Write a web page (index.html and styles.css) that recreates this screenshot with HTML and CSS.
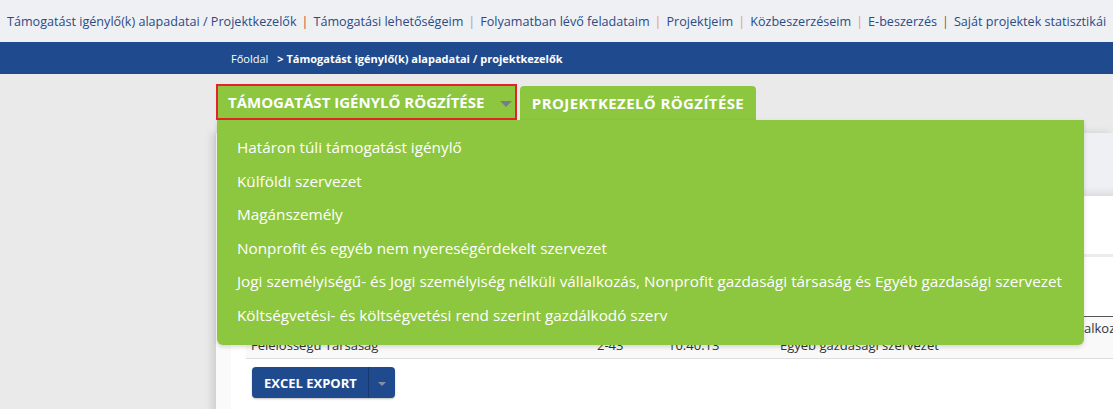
FILE: index.html
```html
<!DOCTYPE html>
<html lang="hu">
<head>
    <meta charset="UTF-8">
    <meta name="viewport" content="width=device-width, initial-scale=1.0">
    <title>Támogatást igénylő(k) alapadatai / Projektkezelők</title>
    <link rel="stylesheet" href="styles.css">
</head>
<body>
    <nav class="top-nav">
        <a href="#">Támogatást igénylő(k) alapadatai / Projektkezelők</a><span class="sep sep-red">|</span>
        <a href="#">Támogatási lehetőségeim</a><span class="sep sep-grey">|</span>
        <a href="#">Folyamatban lévő feladataim</a><span class="sep sep-orange">|</span>
        <a href="#">Projektjeim</a><span class="sep sep-orange">|</span>
        <a href="#">Közbeszerzéseim</a><span class="sep sep-orange">|</span>
        <a href="#">E-beszerzés</a><span class="sep sep-red">|</span>
        <a href="#">Saját projektek statisztikái</a>
    </nav>

    <div class="breadcrumb">
        <a href="#">Főoldal</a>
        <span class="crumb-current">&gt; Támogatást igénylő(k) alapadatai / projektkezelők</span>
    </div>

    <main class="main">
        <div class="tabs">
            <div class="tab-wrap active">
                <button class="tab tab-dropdown">TÁMOGATÁST IGÉNYLŐ RÖGZÍTÉSE <span class="caret"></span></button>
                <ul class="dropdown-menu">
                    <li><a href="#">Határon túli támogatást igénylő</a></li>
                    <li><a href="#">Külföldi szervezet</a></li>
                    <li><a href="#">Magánszemély</a></li>
                    <li><a href="#">Nonprofit és egyéb nem nyereségérdekelt szervezet</a></li>
                    <li><a href="#">Jogi személyiségű- és Jogi személyiség nélküli vállalkozás, Nonprofit gazdasági társaság és Egyéb gazdasági szervezet</a></li>
                    <li><a href="#">Költségvetési- és költségvetési rend szerint gazdálkodó szerv</a></li>
                </ul>
            </div>
            <button class="tab tab-second">PROJEKTKEZELŐ RÖGZÍTÉSE</button>
        </div>

        <section class="card">
            <div class="panel">
                <div class="panel-header"></div>
                <div class="panel-filter"></div>
                <table class="data-table">
                    <thead>
                        <tr>
                            <th class="col-name">Név</th>
                            <th class="col-id">Adószám</th>
                            <th class="col-time">Rögzítve</th>
                            <th class="col-type">Típus</th>
                            <th class="col-more">Forma</th>
                        </tr>
                    </thead>
                    <tbody>
                        <tr>
                            <td>Jogi Személyiségű Korlátolt<br>Felelősségű Társaság</td>
                            <td>12345678-<br>2-43</td>
                            <td>2021.05.12.<br>10:40:13</td>
                            <td>Nonprofit gazdasági társaság és<br>Egyéb gazdasági szervezet</td>
                            <td>Egyéni vállalkozás</td>
                        </tr>
                    </tbody>
                </table>
                <div class="btn-split">
                    <button class="btn-export">EXCEL EXPORT</button>
                    <button class="btn-caret"><span class="caret"></span></button>
                </div>
            </div>
        </section>
    </main>
</body>
</html>
```

FILE: styles.css
```css
body {
    margin: 0;
    padding: 0;
    font-family: "Open Sans", Arial, sans-serif;
    background-color: #eaeaea;
    overflow: hidden;
}

a {
    text-decoration: none;
    color: inherit;
}

/* Top navigation */
.top-nav {
    height: 42px;
    display: flex;
    align-items: center;
    padding-left: 7px;
    background-color: #eff0f4;
    white-space: nowrap;
    font-size: 12.6px;
    color: #2c4a84;
}

.sep {
    margin: 0 5px;
}

.sep-red { color: #c0392b; }
.sep-grey { color: #a0a0a0; }
.sep-orange { color: #e6a23c; }

/* Breadcrumb */
.breadcrumb {
    height: 32px;
    display: flex;
    align-items: center;
    padding-left: 231px;
    background-color: #1f4b8e;
    color: #fff;
    font-size: 11px;
}

.crumb-current {
    margin-left: 9px;
    font-weight: 700;
}

/* Main */
.main {
    padding: 10px 0 0 216px;
}

.tabs {
    display: flex;
    align-items: flex-end;
    gap: 3px;
    height: 36px;
}

.tab-wrap {
    position: relative;
}

.tab {
    height: 34px;
    padding: 0 12px;
    border: none;
    border-radius: 4px 4px 0 0;
    background-color: #8dc63f;
    color: #fff;
    font-family: inherit;
    font-size: 15px;
    font-weight: 700;
    white-space: nowrap;
}

.tab-dropdown {
    width: 301px;
    height: 36px;
    text-align: left;
    padding-left: 10px;
    border: 2px solid #e3242b;
    border-radius: 0;
}

.tab-second {
    width: 236px;
    padding: 0;
    letter-spacing: 0.4px;
}

.caret {
    display: inline-block;
    width: 0;
    height: 0;
    margin-left: 12px;
    vertical-align: middle;
    border-left: 6px solid transparent;
    border-right: 6px solid transparent;
    border-top: 6px solid #7a7a8c;
}

.dropdown-menu {
    position: absolute;
    top: 36px;
    left: 1px;
    z-index: 10;
    width: 867px;
    margin: 0;
    padding: 11px 0 12px;
    list-style: none;
    background-color: #8dc63f;
    border-radius: 0 0 6px 6px;
    box-shadow: 0 2px 4px rgba(0, 0, 0, 0.15);
}

.dropdown-menu li a {
    display: block;
    padding: 0 20px;
    line-height: 33.6px;
    color: #fff;
    font-size: 15.3px;
    white-space: nowrap;
}

/* Card */
.card {
    margin-top: 13px;
    padding-left: 15px;
    background-color: #fafafa;
    box-shadow: -4px 0 8px rgba(0, 0, 0, 0.12);
    height: 300px;
}

.panel {
    background-color: #fff;
    padding: 0 0 0 15px;
    height: 100%;
}

.panel-header {
    height: 63px;
    margin-left: -15px;
    background: linear-gradient(#eff0f4 85%, #dedfe3);
}

.panel-filter {
    height: 58px;
    border-bottom: 3px solid #ececf0;
}

.data-table {
    width: 1000px;
    margin-top: 34px;
    table-layout: fixed;
    border-collapse: collapse;
    font-size: 13px;
    color: #333;
    white-space: nowrap;
}

.data-table th {
    padding: 4px 5px;
    line-height: 17px;
    text-align: left;
    font-weight: 700;
    border-bottom: 1px solid #555;
}

.data-table td {
    padding: 3px 5px 4px;
    line-height: 17px;
    vertical-align: top;
    background-color: #f9f9f9;
    border-bottom: 1px solid #ddd;
}

.col-name { width: 336px; }
.col-id { width: 61px; }
.col-time { width: 102px; }
.col-type { width: 231px; }

.btn-split {
    display: inline-flex;
    margin: 8px 0 0 6px;
    height: 31px;
    border-radius: 4px;
    overflow: hidden;
    background-color: #1f4b8e;
    box-shadow: 0 1px 2px rgba(0, 0, 0, 0.25);
}

.btn-split button {
    border: none;
    background: none;
    color: #fff;
    font-family: inherit;
    font-weight: 700;
    font-size: 13px;
}

.btn-export {
    width: 117px;
    padding-left: 12px;
    text-align: left;
    border-right: 1px solid #163a70 !important;
}

.btn-caret {
    width: 26px;
    padding: 0;
}

.btn-caret .caret {
    margin: 0;
    border-left-width: 4px;
    border-right-width: 4px;
    border-top: 4px solid #8a8fa0;
}
```
